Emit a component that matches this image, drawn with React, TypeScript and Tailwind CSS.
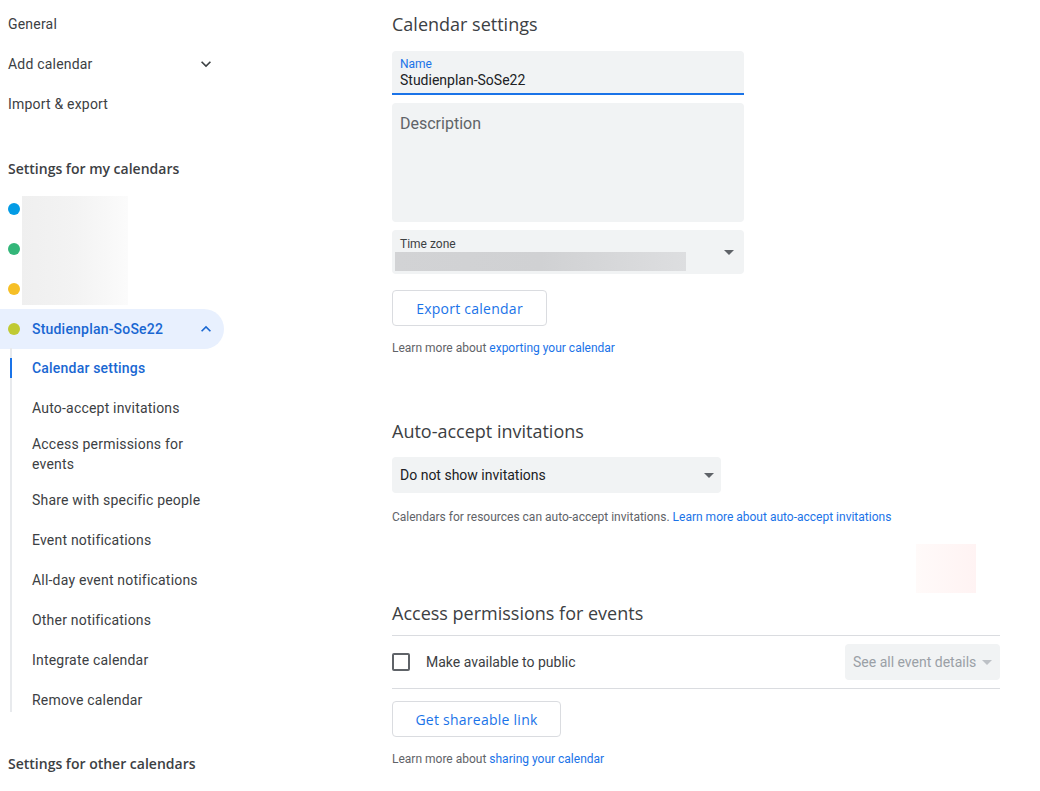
import React from "react";

const Chev = ({ up }: { up?: boolean }) => (
  <svg width="20" height="20" viewBox="0 0 24 24" className={up ? "rotate-180" : ""}>
    <path d="M7.41 8.59L12 13.17l4.59-4.58L18 10l-6 6-6-6 1.41-1.41z" fill="currentColor" />
  </svg>
);

const Tri = ({ c = "#5f6368" }: { c?: string }) => (
  <svg width="10" height="5" viewBox="0 0 10 5">
    <path d="M0 0l5 5 5-5z" fill={c} />
  </svg>
);

const H = "font-['Open_Sans',sans-serif]";

export default function App() {
  return (
    <div className="flex w-[1040px] h-[791px] overflow-hidden bg-white font-['Roboto',sans-serif] text-[14px] tracking-[0.2px] text-[#3c4043]">
      {/* Sidebar */}
      <div className="w-[256px] shrink-0 flex flex-col pt-[4px]">
        <div className="h-[40px] flex items-center pl-[8px]">General</div>
        <div className="h-[40px] flex items-center pl-[8px] pr-[8px] justify-between w-[224px] text-[#3c4043]">
          <span>Add calendar</span>
          <span className="text-[#3c4043]"><Chev /></span>
        </div>
        <div className="h-[40px] flex items-center pl-[8px]">Import &amp; export</div>
        <div className={`h-[44px] mt-[22px] flex items-center pl-[8px] font-semibold ${H} text-[14px] tracking-[0px]`}>
          Settings for my calendars
        </div>
        <div className="relative mt-[-1px]">
          {["#039be5", "#33b679", "#f6bf26"].map((c) => (
            <div key={c} className="h-[40px] flex items-center pl-[8px]">
              <span className="w-[12px] h-[12px] rounded-full" style={{ background: c }} />
            </div>
          ))}
          <div className="absolute left-[22px] top-[7px] w-[106px] h-[109px] bg-gradient-to-r from-[#efefef] via-[#f3f3f3] to-[#fbfbfb]" />
        </div>
        <div className="h-[40px] w-[224px] flex items-center pl-[8px] pr-[8px] bg-[#e8f0fe] rounded-r-full text-[#1967d2] font-medium">
          <span className="w-[12px] h-[12px] rounded-full bg-[#c0ca33]" />
          <span className="ml-[12px] flex-1">Studienplan-SoSe22</span>
          <span className="text-[#1967d2]"><Chev up /></span>
        </div>
        <div className="-mt-[1px] ml-[10px] border-l-2 border-[#e8eaed] flex flex-col">
          <div className="relative h-[40px] flex items-center pl-[20px] text-[#1967d2] font-medium">
            <span className="absolute left-[-2px] top-[10px] w-[2px] h-[20px] bg-[#1a73e8]" />
            Calendar settings
          </div>
          <div className="h-[40px] flex items-center pl-[20px]">Auto-accept invitations</div>
          <div className="h-[52px] flex items-center pl-[20px] leading-[20px] w-[200px]">Access permissions for events</div>
          {["Share with specific people", "Event notifications", "All-day event notifications", "Other notifications", "Integrate calendar"].map((s) => (
            <div key={s} className="h-[40px] flex items-center pl-[20px]">{s}</div>
          ))}
          <div className="h-[32px] pt-[10px] pl-[20px] leading-[20px]">Remove calendar</div>
        </div>
        <div className={`mt-[42px] pl-[8px] font-semibold ${H} text-[14px] tracking-[0px] leading-[20px]`}>
          Settings for other calendars
        </div>
      </div>

      {/* Main */}
      <div className="ml-[136px] w-[608px] flex flex-col tracking-normal">
        <div className={`${H} text-[18px] leading-[24px] mt-[12px] text-[#3c4043]`}>Calendar settings</div>
        <div className="mt-[15px] w-[352px] h-[44px] bg-[#f1f3f4] rounded-t-[4px] border-b-2 border-[#1a73e8] px-[8px] pt-[6px]">
          <div className="text-[12px] leading-[14px] text-[#1a73e8]">Name</div>
          <div className="text-[14px] leading-[18px] text-[#202124]">Studienplan-SoSe22</div>
        </div>
        <div className="mt-[8px] w-[352px] h-[119px] bg-[#f1f3f4] rounded-[4px] px-[8px] pt-[11px] text-[16px] leading-[20px] text-[#5f6368]">
          Description
        </div>
        <div className="mt-[8px] w-[352px] h-[44px] bg-[#f1f3f4] rounded-[4px] relative flex">
          <div className="flex-1 pt-[7px]">
            <div className="px-[8px] text-[12px] leading-[14px] text-[#3c4043]">Time zone</div>
            <div className="ml-[3px] mt-[1px] w-[291px] h-[19px] bg-gradient-to-r from-[#d2d3d5] via-[#d0d1d3] to-[#dddee0]" />
          </div>
          <div className="w-[24px] flex items-center justify-center pr-[6px]"><Tri /></div>
        </div>
        <button className={`mt-[16px] w-[155px] h-[36px] border border-[#dadce0] rounded-[4px] text-[#1a73e8] ${H} font-medium text-[14px] tracking-[0.25px]`}>
          Export calendar
        </button>
        <div className="mt-[14px] text-[12px] leading-[16px] text-[#5f6368]">
          Learn more about <span className="text-[#1a73e8]">exporting your calendar</span>
        </div>
        <div className={`${H} text-[18px] leading-[24px] mt-[63px]`}>Auto-accept invitations</div>
        <div className="mt-[14px] w-[329px] h-[36px] bg-[#f1f3f4] rounded-[4px] flex items-center justify-between pl-[8px] pr-[7px] text-[#202124]">
          <span>Do not show invitations</span>
          <Tri />
        </div>
        <div className="mt-[16px] text-[12px] leading-[16px] text-[#5f6368]">
          Calendars for resources can auto-accept invitations. <span className="text-[#1a73e8]">Learn more about auto-accept invitations</span>
        </div>
        <div className="mt-[19px] ml-[524px] w-[60px] h-[49px] bg-gradient-to-r from-[#fffaf9] to-[#fff3f3]" />
        <div className={`${H} text-[18px] leading-[24px] mt-[8px]`}>Access permissions for events</div>
        <div className="mt-[10px] border-t border-[#dadce0] border-b h-[54px] flex items-center justify-between">
          <div className="flex items-center">
            <span className="w-[18px] h-[18px] border-2 border-[#5f6368] rounded-[2px]" />
            <span className="ml-[16px]">Make available to public</span>
          </div>
          <div className="w-[155px] h-[36px] bg-[#f1f3f4] rounded-[4px] flex items-center justify-between pl-[8px] pr-[8px] text-[#9aa0a6]">
            <span>See all event details</span>
            <Tri c="#bdc1c6" />
          </div>
        </div>
        <button className={`mt-[12px] w-[169px] h-[36px] border border-[#dadce0] rounded-[4px] text-[#1a73e8] ${H} font-medium text-[14px] tracking-[0.25px]`}>
          Get shareable link
        </button>
        <div className="mt-[14px] text-[12px] leading-[16px] text-[#5f6368]">
          Learn more about <span className="text-[#1a73e8]">sharing your calendar</span>
        </div>
      </div>
    </div>
  );
}
